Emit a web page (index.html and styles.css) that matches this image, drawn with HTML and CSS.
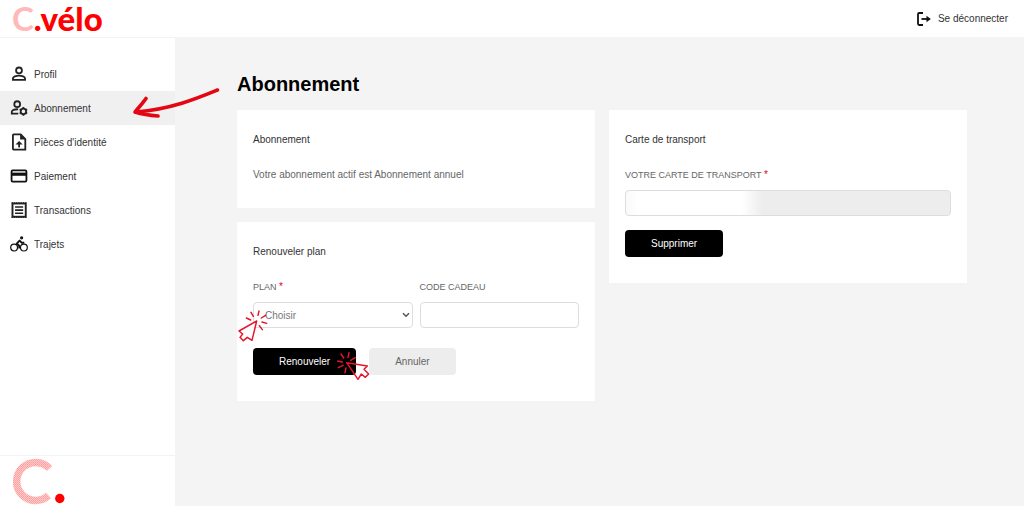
FILE: index.html
```
<!DOCTYPE html>
<html lang="fr">
<head>
  <meta charset="UTF-8" />
  <meta name="viewport" content="width=device-width, initial-scale=1.0" />
  <title>C.vélo - Abonnement</title>
  <link rel="stylesheet" href="styles.css">
</head>
<body>
  <header class="topbar">
    <a href="#" class="logo"><span class="logo-c">C</span>.vélo</a>
    <a href="#" class="logout">
      <svg width="14" height="14" viewBox="0 0 14 14" fill="none" stroke="#111" stroke-width="1.8">
        <path d="M6 1H2.2Q1 1 1 2.2v9.6Q1 13 2.2 13H6" />
        <path d="M4.500 7H11" />
        <path d="M9.500 3.700 13.800 7 9.500 10.300z" fill="#111" stroke="none" />
      </svg>
      Se déconnecter
    </a>
  </header>

  <div class="layout">
    <aside class="sidebar">
      <nav class="menu">
        <a href="#" class="menu-item">
          <svg class="icon" viewBox="1 1 16 16" fill="none" stroke="#222" stroke-width="1.6">
            <circle cx="9" cy="5.800" r="2.600" />
            <path d="M3.600 14.200v-1.300c0-1.500 3-2.400 5.400-2.400s5.400.9 5.400 2.400v1.300z" />
          </svg>
          Profil
        </a>
        <a href="#" class="menu-item active">
          <svg class="icon" viewBox="1 1 16 16" fill="none" stroke="#222" stroke-width="1.6">
            <circle cx="7.400" cy="5.600" r="2.600" />
            <path d="M8.400 14H2.600v-1.600c0-1.400 2.300-2.400 5.600-2.300" />
            <circle cx="12.900" cy="12" r="2.400" />
            <path d="M12.900 8.200v1.600M12.900 14.200v1.600M9.600 10.100l1.400.8M14.800 13.100l1.400.8M9.600 13.900l1.400-.8M14.800 10.900l1.400-.8" />
          </svg>
          Abonnement
          <svg class="arrow" viewBox="0 0 88 34" fill="none" stroke="#e30613" stroke-width="3.6" stroke-linecap="round" stroke-linejoin="round">
            <path d="M85.500 5C66 13 40 24 4 27" />
            <path d="M14 13.500C11 18 7 22 3 27C11 29.500 19 30.500 26 31" />
          </svg>
        </a>
        <a href="#" class="menu-item">
          <svg class="icon" viewBox="1 1 16 16" fill="none" stroke="#222" stroke-width="1.6">
            <path d="M4.200 2.300H10.500L14.600 6.400V15.700H4.200Q3.600 15.700 3.600 15V3Q3.600 2.300 4.200 2.300z" />
            <path d="M10 2.200V6.800H14.500z" fill="#222" stroke="none" />
            <path d="M9.100 13.800V10" />
            <path d="M5.900 11.200 9.100 8 12.300 11.200z" fill="#222" stroke="none" />
          </svg>
          Pièces d'identité
        </a>
        <a href="#" class="menu-item">
          <svg class="icon" viewBox="1 1 16 16" fill="none" stroke="#111" stroke-width="1.6">
            <rect x="2.400" y="4" width="13.200" height="10" rx="1" />
            <path d="M2.400 7.400h13.200" stroke-width="2.800" />
          </svg>
          Paiement
        </a>
        <a href="#" class="menu-item">
          <svg class="icon" viewBox="1 1 16 16" fill="none" stroke="#222">
            <rect x="3.200" y="3.200" width="11.800" height="11.800" stroke-width="1.700" />
            <path d="M2.400 2.500H15.800M2.400 15.700H15.800" stroke-dasharray="1.200 .8" />
            <path d="M5.500 6.300h7.200M5.500 9.100h7.200M5.500 11.900h7.200" stroke-width="1.400" />
          </svg>
          Transactions
        </a>
        <a href="#" class="menu-item">
          <svg class="icon" viewBox="0 0 18 18" fill="none" stroke="#111">
            <circle cx="4.100" cy="12.600" r="3.400" stroke-width="1.200" />
            <circle cx="13.900" cy="12.600" r="3.400" stroke-width="1.200" />
            <circle cx="11.600" cy="2.800" r="1.600" fill="#111" stroke="none" />
            <path d="M9.200 13.600V10.800L6.800 8.600 9.600 5.600 11.600 7.700H14.300" stroke-width="1.900" stroke-linejoin="round" />
          </svg>
          Trajets
        </a>
      </nav>
      <div class="sidebar-footer">
        <svg width="54" height="50" viewBox="0 0 54 50">
          <defs>
            <pattern id="hatch" width="2" height="2" patternUnits="userSpaceOnUse">
              <rect width="2" height="2" fill="#ffcaca" />
              <rect width="1" height="1" fill="#ff9c9c" />
              <rect x="1" y="1" width="1" height="1" fill="#ffa6a6" />
            </pattern>
          </defs>
          <path d="M36.500 12.500A19 19 0 1 0 35.500 39.500" fill="none" stroke="url(#hatch)" stroke-width="7.500" />
          <circle cx="46.800" cy="42.500" r="4.700" fill="#f00" />
        </svg>
      </div>
    </aside>

    <main class="content">
      <h1>Abonnement</h1>
      <div class="columns">
        <div class="column">
          <section class="card">
            <h2>Abonnement</h2>
            <p>Votre abonnement actif est Abonnement annuel</p>
          </section>

          <section class="card">
            <h2>Renouveler plan</h2>
            <form>
              <div class="fields">
                <div class="field">
                  <label for="plan">PLAN <span class="required">*</span></label>
                  <select id="plan">
                    <option>Choisir</option>
                  </select>
                  <svg class="chevron" viewBox="0 0 8 6" fill="none" stroke="#555" stroke-width="1.500">
                    <path d="M1 1.300 4 4.300 7 1.300" />
                  </svg>
                  <svg class="click click-plan" viewBox="24 44 90 99" fill="none" stroke="#e8142a" stroke-width="4.400" stroke-linejoin="round" stroke-linecap="round">
                    <path d="M80 77 27 107 38 116 30 126 40 136 52 126 66 135z" fill="#fff" />
                    <path d="M49 68 62 74M63 51 70 63M87 47 84 60M94 68 107 60M96 80 110 84M88 91 97 103" />
                  </svg>
                </div>
                <div class="field">
                  <label for="code">CODE CADEAU</label>
                  <input type="text" id="code">
                </div>
              </div>
              <div class="actions">
                <button type="button" class="btn">
                  Renouveler
                  <svg class="click click-renew" viewBox="36 38 99 87" fill="none" stroke="#e8142a" stroke-width="4.400" stroke-linejoin="round" stroke-linecap="round">
                    <path d="M65 70 127 80 117 90 131 104 121 114 109 104 99 120z" />
                    <path d="M38 65 52 68M48 44 56 56M72 40 69 54M77 63 91 55M54 78 40 85M63 86 60 100" />
                  </svg>
                </button>
                <button type="button" class="btn btn-light">Annuler</button>
              </div>
            </form>
          </section>
        </div>

        <div class="column">
          <section class="card">
            <h2>Carte de transport</h2>
            <form>
              <div class="field">
                <label for="card">VOTRE CARTE DE TRANSPORT <span class="required">*</span></label>
                <input type="text" id="card" class="masked" disabled>
              </div>
              <div class="actions actions-tight">
                <button type="button" class="btn">Supprimer</button>
              </div>
            </form>
          </section>
        </div>
      </div>
    </main>
  </div>
</body>
</html>
```
FILE: styles.css
```
* {
  box-sizing: border-box;
}
body {
  margin: 0;
  padding-bottom: 3px;
  min-height: 100vh;
  display: flex;
  flex-direction: column;
  font-family: "Liberation Sans", Arial, sans-serif;
  font-size: 10px;
  color: #333;
  background: white;
}
a {
  color: inherit;
  text-decoration: none;
}

/* header */
.topbar {
  height: 38px;
  display: flex;
  align-items: center;
  justify-content: space-between;
  padding: 0 16px 0 12px;
  border-bottom: 1px solid #f3f3f3;
}
.logo {
  font-family: Lato, sans-serif;
  font-size: 33px;
  line-height: 36px;
  padding-bottom: 2px;
  font-weight: 900;
  color: #f00;
}
.logo-c {
  font-weight: 700;
  color: #ffb9b9;
}
.logout {
  display: flex;
  align-items: center;
  gap: 7px;
}

.layout {
  flex: 1;
  display: flex;
}

/* sidebar */
.sidebar {
  width: 175px;
  flex-shrink: 0;
  display: flex;
  flex-direction: column;
  justify-content: space-between;
}
.menu {
  padding-top: 19px;
}
.menu-item {
  position: relative;
  height: 34px;
  display: flex;
  align-items: center;
  gap: 6px;
  padding-left: 10px;
}
.menu-item.active {
  background: #f0f0f0;
}
.icon {
  width: 18px;
  height: 18px;
}
.arrow {
  position: absolute;
  left: 132px;
  top: -6px;
  width: 88px;
  height: 34px;
  z-index: 2;
}
.sidebar-footer {
  border-top: 1px solid #f3f3f3;
  padding-left: 13px;
}
.sidebar-footer svg {
  display: block;
}

/* content */
.content {
  flex: 1;
  padding: 32px 57px 32px 62px;
  background: #f4f4f4;
}
h1 {
  margin: 0 0 12px;
  font-size: 20px;
  line-height: 28px;
  color: #000;
}
.columns {
  display: grid;
  grid-template-columns: 1fr 1fr;
  gap: 14px;
  align-items: start;
}
.column {
  display: flex;
  flex-direction: column;
  gap: 14px;
}
.card {
  background: white;
  padding: 20px 16px 24px;
}
.card h2 {
  margin: 0 0 16px;
  font-size: 10px;
  line-height: 20px;
  font-weight: normal;
}
.card p {
  margin: 0;
  line-height: 18px;
  color: #666;
}

/* forms */
form {
  padding-bottom: 2px;
}
.fields {
  display: grid;
  grid-template-columns: 1fr 1fr;
  gap: 7px;
}
.field {
  position: relative;
}
.field label {
  display: block;
  margin-bottom: 6px;
  font-size: 9px;
  line-height: 18px;
  color: #666;
}
.required {
  color: #e30613;
  font-size: 10px;
}
.field input,
.field select {
  display: block;
  width: 100%;
  height: 26px;
  padding: 0 11px;
  border: 1px solid #ddd;
  border-radius: 4px;
  background: white;
  font-family: inherit;
  font-size: 10px;
  color: #777;
  appearance: none;
}
.field .masked {
  background: linear-gradient(90deg, #fafafa, #fff 12px, #fff 116px, #ededed 136px);
}
.chevron {
  position: absolute;
  right: 3px;
  bottom: 10px;
  width: 8px;
  height: 6px;
  pointer-events: none;
}
.actions {
  display: flex;
  gap: 13px;
  margin-top: 20px;
}
.actions-tight {
  margin-top: 14px;
}
.btn {
  position: relative;
  height: 27px;
  padding: 0 26px;
  border: none;
  border-radius: 4px;
  background: #000;
  color: white;
  font-family: inherit;
  font-size: 10px;
}
.btn-light {
  background: #ededed;
  color: #666;
}

/* click markers */
.click {
  position: absolute;
  z-index: 2;
  pointer-events: none;
}
.click-plan {
  left: -15px;
  top: 32px;
  width: 30px;
  height: 33px;
}
.click-renew {
  right: -14px;
  top: 4px;
  width: 33px;
  height: 29px;
}
```
